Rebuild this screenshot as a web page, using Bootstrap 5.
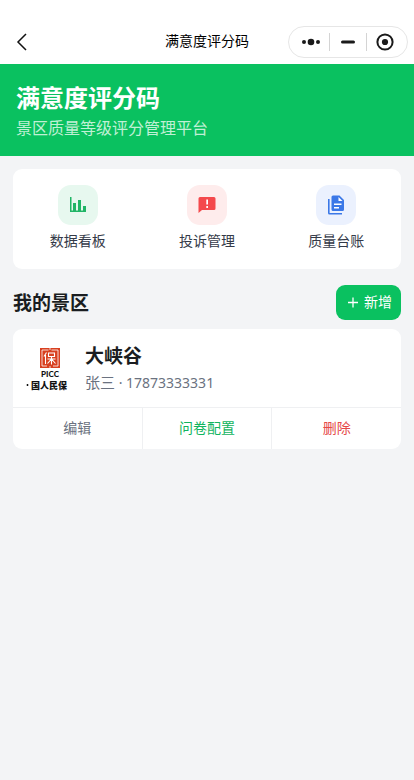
<!DOCTYPE html>
<html lang="zh-CN">
<head>
<meta charset="utf-8">
<meta name="viewport" content="width=device-width, initial-scale=1">
<title>满意度评分码</title>
<link href="https://cdn.jsdelivr.net/npm/bootstrap@5.3.0/dist/css/bootstrap.min.css" rel="stylesheet">
<style>
body { background: #f3f4f6; color: #1a1d21; font: 14px/20px "Noto Sans", "Noto Sans CJK SC", sans-serif; }
.topbar { padding: 26px 6px 6px; }
.topbar > * { flex: 1 1 0; }
.page-title { font-size: 14px; line-height: 20px; color: #000; padding-bottom: 2px; }
.back, .capsule button { border: 0; background: none; padding: 0; display: flex; align-items: center; justify-content: center; }
.back { width: 32px; height: 32px; }
.capsule { width: 120px; height: 32px; border: 1px solid #e6e6e6; border-radius: 16px; padding: 0 4px; }
.capsule button { flex: 1; height: 18px; }
.capsule button + button { border-left: 1px solid #d4d4d4; }
.banner { background: #0ac160; padding: 17px 16px 14px; }
.banner h1 { font-size: 24px; line-height: 33px; }
.banner p { font-size: 16px; line-height: 28px; color: #c0f0d5; }
main { padding: 13px; }
.panel { background: #fff; border-radius: 9px; }
.shortcuts { padding: 16px 0 18px; }
.shortcut { color: #343a48; gap: 6px; }
.tile { width: 40px; height: 40px; border-radius: 13px; }
.tile-green { background: #e7f8ef; }
.tile-red { background: #feecec; }
.tile-blue { background: #ebf1fe; }
.section-head { padding: 16px 0 9px; }
.section-head h2 { font-size: 19px; line-height: 28px; }
.add { height: 35px; border: 0; border-radius: 9px; background: #0ac160; color: #fff; padding: 0 9px 2px 10px; gap: 4px; }
.spot { padding: 13px 13px 12px; gap: 14px; }
.spot h3 { font-size: 19px; line-height: 28px; }
.spot p { font-size: 14px; line-height: 24px; color: #6b7280; }
.person { font-size: 15px; }
.actions { border-top: 1px solid #eff0f2; }
.actions button { height: 41px; border: 0; background: none; color: #6b7280; padding: 0 0 2px; }
.actions button + button { border-left: 1px solid #eff0f2; }
.actions .survey { color: #10b45e; }
.actions .remove { color: #e54848; }
</style>
</head>
<body>
<header class="topbar bg-white d-flex align-items-center">
  <div><button class="back" type="button" aria-label="返回"><svg width="12" height="18" viewBox="0 0 12 18" fill="none" stroke="#111" stroke-width="1.5"><path d="M10 1 2 9l8 8"/></svg></button></div>
  <div class="page-title text-center text-nowrap">满意度评分码</div>
  <div class="d-flex justify-content-end">
    <div class="capsule d-flex align-items-center">
      <button type="button" aria-label="更多"><svg width="20" height="10" viewBox="0 0 20 10" fill="#1a1a1a"><circle cx="3" cy="5" r="2"/><circle cx="10" cy="5" r="3.3"/><circle cx="17" cy="5" r="2"/></svg></button>
      <button type="button" aria-label="最小化"><svg width="14" height="4" viewBox="0 0 14 4"><rect y=".5" width="14" height="3" rx="1.5" fill="#1a1a1a"/></svg></button>
      <button type="button" aria-label="关闭"><svg width="18" height="18" viewBox="0 0 18 18"><circle cx="9" cy="9" r="7.6" fill="none" stroke="#1a1a1a" stroke-width="2"/><circle cx="9" cy="9" r="3.1" fill="#1a1a1a"/></svg></button>
    </div>
  </div>
</header>
<section class="banner">
  <h1 class="fw-bold text-white m-0">满意度评分码</h1>
  <p class="m-0">景区质量等级评分管理平台</p>
</section>
<main>
  <nav class="panel shortcuts row g-0">
    <a href="#board" class="shortcut col-4 d-flex flex-column align-items-center text-decoration-none">
      <span class="tile tile-green d-flex align-items-center justify-content-center"><svg width="18" height="18" viewBox="0 0 18 18" fill="#20b566"><path d="M1 1h1.500v13.500H17V16H1zM4 7h3v8H4zM9 4h3v11H9zM14 10h3v5h-3z"/></svg></span>数据看板</a>
    <a href="#complaints" class="shortcut col-4 d-flex flex-column align-items-center text-decoration-none">
      <span class="tile tile-red d-flex align-items-center justify-content-center"><svg width="18" height="18" viewBox="0 0 18 18"><path fill="#f4494c" d="M2 1h14a1.500 1.500 0 0 1 1.500 1.500v10a1.500 1.500 0 0 1-1.500 1.500H4L.5 17V2.500A1.500 1.500 0 0 1 2 1z"/><path fill="#fff" d="M8.300 3.500h1.700v5H8.300zM8.300 10h1.700v2H8.300z"/></svg></span>投诉管理</a>
    <a href="#ledger" class="shortcut col-4 d-flex flex-column align-items-center text-decoration-none">
      <span class="tile tile-blue d-flex align-items-center justify-content-center"><svg width="18" height="20" viewBox="0 0 18 20"><path fill="#3b78e7" d="M6 .5h6.500L17 5v9.500a1.500 1.500 0 0 1-1.500 1.500H6a1.500 1.500 0 0 1-1.500-1.500V2A1.500 1.500 0 0 1 6 .5zM1 4h1.600v13.900H15v1.600H2.500A1.500 1.500 0 0 1 1 18z"/><path fill="#fff" d="M11.500 2v4h4zM7 8.500h7.500V10H7zM7 12h5v1.500H7z"/></svg></span>质量台账</a>
  </nav>
  <div class="section-head d-flex align-items-center justify-content-between">
    <h2 class="fw-bold m-0">我的景区</h2>
    <button class="add d-flex align-items-center" type="button"><svg width="14" height="12" viewBox="0 0 14 12" stroke="#fff" stroke-width="1.300"><path d="M2 6.500h10M7 1.500v10"/></svg>新增</button>
  </div>
  <article class="panel overflow-hidden">
    <div class="spot d-flex align-items-center">
      <svg width="45" height="52" viewBox="0 0 45 52" class="flex-shrink-0" role="img" aria-label="PICC">
        <rect x="14" y="5" width="20" height="20" fill="#d84020"/>
        <path fill="none" stroke="#fff" stroke-width=".8" d="M22.500 7H16v16h5M25.500 7H32v16h-5M24 5v2M24 23v2"/>
        <path fill="none" stroke="#fff" stroke-width="1.100" d="M20.500 9.500 18 13.500M19.500 12v9M22.500 10h6v3.500h-6zM21.500 16h8M25.500 13.500v8M25 16.500l-3.500 4M26 16.500l3.500 4"/>
        <text x="24" y="34" text-anchor="middle" font-family="Lato, sans-serif" font-size="8" font-weight="900" fill="#111">PICC</text>
        <path stroke="#111" stroke-width="1.500" d="M1.500 41v2"/>
        <text x="5" y="46" font-family="Noto Sans CJK SC, sans-serif" font-size="9" font-weight="900" fill="#111">国人民保</text>
      </svg>
      <div>
        <h3 class="fw-bold m-0">大峡谷</h3>
        <p class="m-0"><span class="person">张三</span> · 17873333331</p>
      </div>
    </div>
    <div class="actions d-flex">
      <button class="col" type="button">编辑</button>
      <button class="col survey" type="button">问卷配置</button>
      <button class="col remove" type="button">删除</button>
    </div>
  </article>
</main>
<script src="https://cdn.jsdelivr.net/npm/bootstrap@5.3.0/dist/js/bootstrap.bundle.min.js"></script>
</body>
</html>
